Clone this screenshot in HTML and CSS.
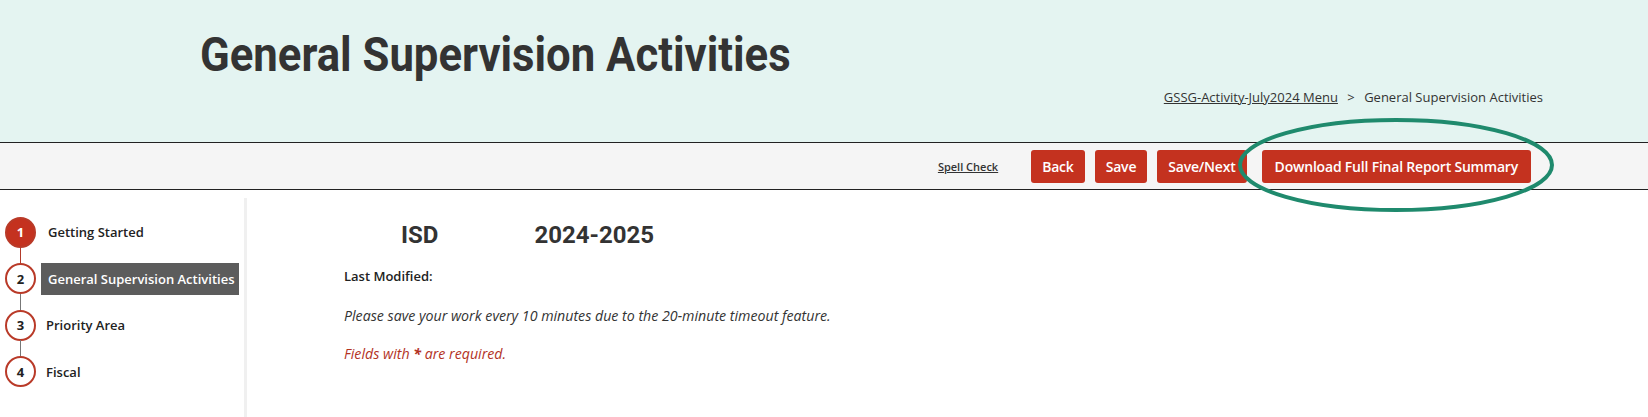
FILE: index.html
```html
<!DOCTYPE html>
<html lang="en">
<head>
    <meta charset="UTF-8">
    <meta name="viewport" content="width=device-width, initial-scale=1.0">
    <title>General Supervision Activities</title>
    <link rel="stylesheet" href="styles.css">
</head>
<body>
    <header class="page-header">
        <h1 class="page-title">General Supervision Activities</h1>
        <div class="breadcrumb">
            <a href="#">GSSG-Activity-July2024 Menu</a>
            <span class="sep">&gt;</span>
            <span>General Supervision Activities</span>
        </div>
    </header>

    <div class="toolbar">
        <a class="spell-check" href="#">Spell Check</a>
        <button class="btn">Back</button>
        <button class="btn">Save</button>
        <button class="btn">Save/Next</button>
        <div class="btn-wrap">
            <button class="btn">Download Full Final Report Summary</button>
            <svg class="highlight" width="320" height="98" viewBox="0 0 320 98">
                <ellipse cx="160" cy="49" rx="156" ry="45" fill="none" stroke="#1f8a6d" stroke-width="4"/>
            </svg>
        </div>
    </div>

    <div class="content">
        <nav class="steps">
            <div class="step done">
                <span class="num">1</span>
                <span class="label">Getting Started</span>
            </div>
            <div class="step active">
                <span class="num">2</span>
                <span class="label">General Supervision Activities</span>
            </div>
            <div class="step">
                <span class="num">3</span>
                <span class="label">Priority Area</span>
            </div>
            <div class="step last">
                <span class="num">4</span>
                <span class="label">Fiscal</span>
            </div>
        </nav>

        <main class="main">
            <div class="heading-row">
                <h2>ISD</h2>
                <h2>2024-2025</h2>
            </div>
            <p class="modified">Last Modified:</p>
            <p class="note">Please save your work every 10 minutes due to the 20-minute timeout feature.</p>
            <p class="required">Fields with <b>*</b> are required.</p>
        </main>
    </div>
</body>
</html>
```

FILE: styles.css
```css
*{
    margin: 0;
    padding: 0;
    box-sizing: border-box;
}

body{
    font-family: "Open Sans", "Liberation Sans", sans-serif;
    color: #333;
    background-color: #fff;
}

.page-header{
    height: 143px;
    background-color: #e4f4f1;
    border-bottom: 1px solid #222;
    padding: 27px 105px 0 200px;
}

.page-title{
    font-family: Roboto, sans-serif;
    font-weight: 700;
    font-size: 48px;
    line-height: 56px;
    color: #333;
    transform: scaleX(0.91);
    transform-origin: left center;
}

.breadcrumb{
    margin-top: 5px;
    text-align: right;
    font-size: 13px;
    color: #333;
}

.breadcrumb a{
    color: #333;
}

.breadcrumb .sep{
    margin: 0 6px;
}

.toolbar{
    height: 47px;
    background-color: #f5f5f5;
    border-bottom: 1px solid #222;
    display: flex;
    justify-content: flex-end;
    align-items: center;
    gap: 10px;
    padding-right: 117px;
}

.spell-check{
    font-size: 11px;
    font-weight: 600;
    color: #333;
    margin-right: 23px;
}

.btn{
    border-radius: 3px;
    padding: 7px 11px;
    font-family: "Open Sans", sans-serif;
    font-size: 14px;
    font-weight: 600;
    letter-spacing: -0.2px;
    background-color: #c4321f;
    border: none;
    color: white;
    cursor: pointer;
}

.btn-wrap{
    position: relative;
    margin-left: 5px;
    display: flex;
}

.btn-wrap .btn{
    padding: 7px 13px;
}

.highlight{
    position: absolute;
    left: 50%;
    top: 50%;
    transform: translate(-50%, -50%);
    margin-top: -1px;
    pointer-events: none;
}

.content{
    display: flex;
}

.steps{
    width: 247px;
    border-right: 3px solid #f0f0f0;
    margin-top: 8px;
    padding: 11px 0 12px 5px;
    min-height: 220px;
}

.step{
    display: flex;
    align-items: center;
    height: 46.5px;
    position: relative;
    font-size: 13px;
    font-weight: 600;
    color: #222;
}

.step::after{
    content: "";
    position: absolute;
    left: 15px;
    top: 38px;
    width: 1px;
    height: 16px;
    background-color: #777;
}

.step.done::after{
    background-color: #b23a2a;
}

.step.last::after{
    display: none;
}

.num{
    width: 31px;
    height: 31px;
    border-radius: 50%;
    border: 2px solid #b93a28;
    background-color: #fff;
    display: flex;
    justify-content: center;
    align-items: center;
    font-size: 13px;
    font-weight: 700;
    color: #222;
    margin-right: 10px;
}

.done .num{
    background-color: #c4321f;
    color: #fff;
}

.done .label{
    margin-left: 2px;
}

.active .label{
    background-color: #5c5c5c;
    color: #fff;
    padding: 7px 4px 7px 7px;
    margin-left: -5px;
}

.main{
    padding: 31px 0 0 97px;
}

.heading-row{
    display: flex;
    padding-left: 57px;
    gap: 96px;
}

.heading-row h2{
    font-family: Roboto, sans-serif;
    font-size: 24px;
    font-weight: 700;
    color: #333;
}

.modified{
    margin-top: 18px;
    font-size: 13px;
    font-weight: 600;
    color: #222;
}

.note{
    margin-top: 21px;
    font-size: 14.2px;
    font-style: italic;
    color: #333;
}

.required{
    margin-top: 19px;
    font-size: 14.2px;
    font-style: italic;
    color: #b3321f;
}
```
